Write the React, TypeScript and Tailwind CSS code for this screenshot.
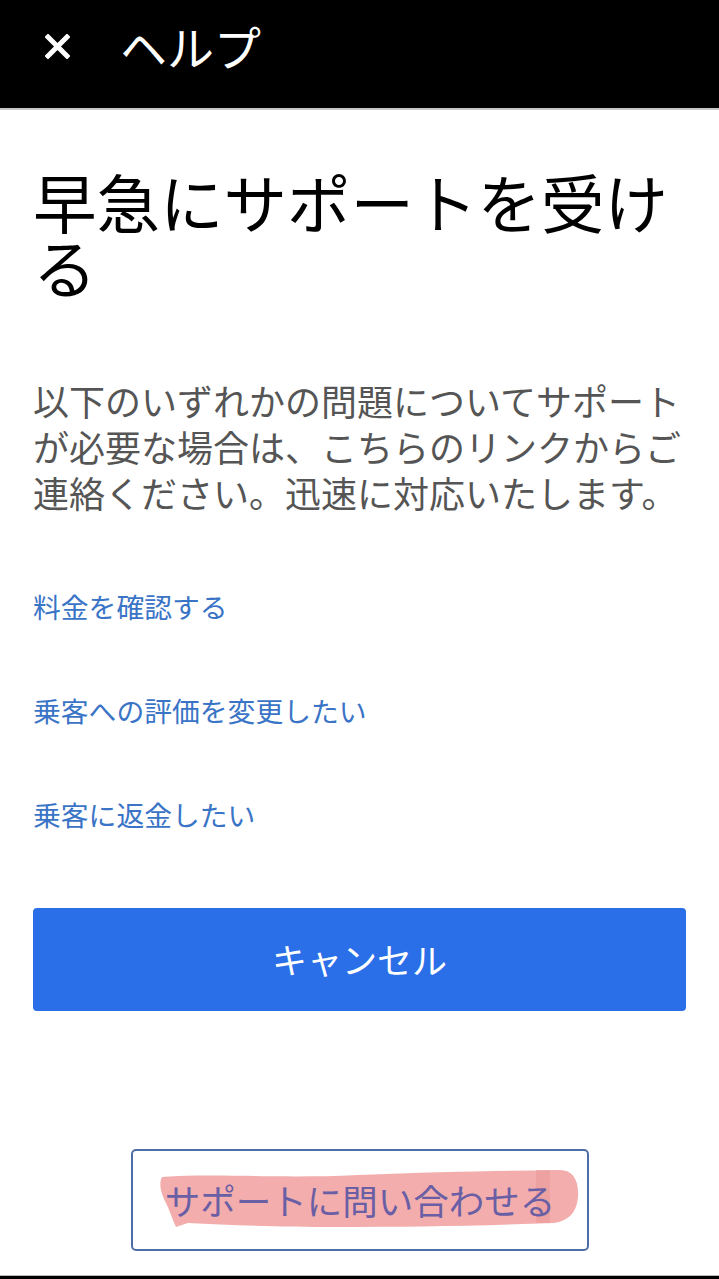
import React from 'react';

const links = ['料金を確認する', '乗客への評価を変更したい', '乗客に返金したい'];

export default function App() {
  return (
    <div
      className="flex min-h-[1279px] w-full flex-col bg-white"
      style={{ fontFamily: '"Noto Sans CJK JP", "Noto Sans", sans-serif' }}
    >
      {/* Header */}
      <header className="flex h-[110px] items-start border-b-2 border-[#c8c8c8] bg-black pt-[16px]">
        <div className="flex h-[60px] w-[120px] items-center pl-[45px]">
          <svg width="25" height="25" viewBox="0 0 25 25">
            <path d="M3 3 L22 22 M22 3 L3 22" stroke="#fff" strokeWidth="5" strokeLinecap="square" />
          </svg>
        </div>
        <h1 className="text-[47px] leading-[60px] font-normal text-white">ヘルプ</h1>
      </header>

      <main className="flex flex-1 flex-col px-[33px]">
        <h2 className="mt-[58px] text-[63.5px] leading-[65px] font-normal text-black">早急にサポートを受ける</h2>

        <p className="mt-[79px] text-[36px] leading-[46px] text-[#555555]">
          以下のいずれかの問題についてサポートが必要な場合は、こちらのリンクからご連絡ください。迅速に対応いたします。
        </p>

        <div className="mt-[77px] flex flex-col gap-[76px]">
          {links.map(l => (
            <a key={l} className="text-[27.8px] leading-[28px] text-[#3a74c6]">{l}</a>
          ))}
        </div>

        <button className="mt-[80px] flex h-[103px] w-full items-center justify-center rounded-[4px] bg-[#2b6fe8] text-[35px] text-white">
          キャンセル
        </button>

        <div className="mt-[138px] flex justify-center pl-[1px]">
          <button className="relative flex h-[102px] w-[458px] items-center justify-center rounded-[5px] border-2 border-[#4d6ea6] bg-white">
            <svg
              className="absolute left-[25px] top-[16px]"
              width="422"
              height="64"
              viewBox="0 0 422 64"
            >
              <path
                d="M4 10 C60 6 120 12 200 8 C280 5 340 4 400 3 C414 2 421 12 420 29 C419 46 410 54 396 56 C320 59 250 60 180 60 C120 60 70 58 30 56 L18 60 C14 52 12 44 8 36 C4 28 0 18 4 10 Z"
                fill="#f2a4a4"
                opacity="0.9"
              />
              <rect x="378" y="3" width="14" height="53" fill="#eb9a9a" opacity="0.6" />
            </svg>
            <span className="relative text-[35.5px] leading-[40px] text-[#6a5fa4]">サポートに問い合わせる</span>
          </button>
        </div>
      </main>

      <div className="mt-[21px] h-[4px] border-t border-[#bbbbbb] bg-black" />
    </div>
  );
}
